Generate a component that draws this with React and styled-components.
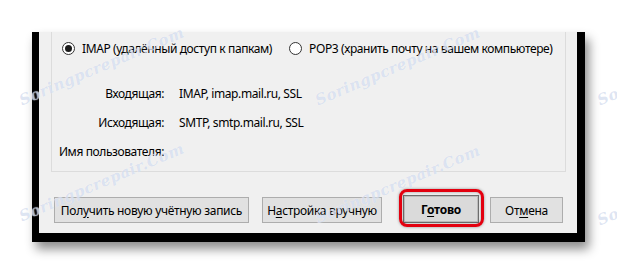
import React from "react";
import styled, { createGlobalStyle } from "styled-components";

const GlobalStyle = createGlobalStyle`
  html, body {
    margin: 0;
    padding: 0;
    background: #ffffff;
  }
  body {
    font-family: "Noto Sans", "Open Sans", sans-serif;
    font-size: 12px;
    color: #000;
  }
`;

const Page = styled.div`
  position: relative;
  width: 617px;
  height: 272px;
  overflow: hidden;
  padding: 32px 0 0 32px;
  box-sizing: border-box;
`;

const Window = styled.div`
  width: 553px;
  box-sizing: border-box;
  background: #f0f0f0;
  border-left: 7px solid #000;
  border-right: 8px solid #000;
  border-bottom: 9px solid #000;
  padding: 0 11px 10px 12px;
  box-shadow: 4px 7px 10px rgba(0, 0, 0, 0.45);
`;

const GroupBox = styled.div`
  height: 140px;
  box-sizing: border-box;
  border: 1px solid #dcdcdc;
  border-top: none;
  padding-top: 8px;
`;

const RadioRow = styled.div`
  display: flex;
  align-items: center;
  height: 16px;
  padding-left: 10px;
`;

const RadioOption = styled.label`
  display: flex;
  align-items: center;
  gap: 7px;
  margin-right: 17px;
  letter-spacing: -0.4px;
  white-space: nowrap;
`;

const RadioCircle = styled.span`
  width: 11px;
  height: 11px;
  border: 1px solid #333;
  border-radius: 50%;
  background: #fff;
  display: flex;
  align-items: center;
  justify-content: center;

  &::after {
    content: "";
    width: 7px;
    height: 7px;
    border-radius: 50%;
    background: ${({ $checked }) => ($checked ? "#1a1a1a" : "transparent")};
  }
`;

const Details = styled.div`
  display: grid;
  grid-template-columns: 112px auto;
  column-gap: 15px;
  row-gap: 13px;
  margin-top: 30px;
  letter-spacing: -0.4px;
`;

const Label = styled.span`
  text-align: right;
  line-height: 16px;
  white-space: nowrap;
`;

const Value = styled.span`
  line-height: 16px;
  white-space: nowrap;
`;

const ButtonRow = styled.div`
  display: flex;
  align-items: flex-end;
  margin-top: 23px;
  padding-left: 3px;
`;

const Button = styled.button`
  position: relative;
  width: ${({ $w }) => $w}px;
  height: ${({ $primary }) => ($primary ? 28 : 26)}px;
  margin-left: ${({ $gap }) => $gap || 0}px;
  box-sizing: border-box;
  background: ${({ $primary }) => ($primary ? "#dadada" : "#e1e1e1")};
  border: 1px solid ${({ $primary }) => ($primary ? "#6f6f6f" : "#adadad")};
  box-shadow: ${({ $primary }) => ($primary ? "inset 0 0 0 1px #bcbcbc" : "none")};
  font-family: "Noto Sans", "Open Sans", sans-serif;
  font-size: 12px;
  font-weight: ${({ $primary }) => ($primary ? 700 : 400)};
  letter-spacing: -0.3px;
  color: #000;
  padding: 0;
  white-space: nowrap;

  u {
    text-decoration-thickness: 1px;
    text-underline-offset: 2px;
  }
`;

const Highlight = styled.span`
  position: absolute;
  top: -7px;
  bottom: -5px;
  left: -5px;
  right: -6px;
  border: 3px solid #e3000f;
  border-radius: 8px;
  box-shadow: 0 0 3px rgba(0, 0, 0, 0.4), inset 0 0 3px rgba(0, 0, 0, 0.35);
  pointer-events: none;
`;

const Watermark = styled.span`
  position: absolute;
  display: inline-block;
  left: ${({ $x }) => $x}px;
  top: ${({ $y }) => $y}px;
  transform: rotate(-23deg);
  transform-origin: left center;
  font-family: "DejaVu Serif", serif;
  font-style: italic;
  font-weight: 700;
  font-size: 15px;
  letter-spacing: 0.5px;
  color: rgba(160, 180, 220, 0.36);
  text-shadow: 0 0 1px rgba(255, 255, 255, 0.8);
  white-space: nowrap;
  pointer-events: none;
`;

const marks = [
  { x: 20, y: 92 },
  { x: 316, y: 92 },
  { x: 598, y: 92 },
  { x: 20, y: 208 },
  { x: 316, y: 210 },
  { x: 598, y: 212 },
];

export default function App() {
  return (
    <>
      <GlobalStyle />
      <Page>
        <Window>
          <GroupBox>
            <RadioRow>
              <RadioOption>
                <RadioCircle $checked />
                IMAP (удалённый доступ к папкам)
              </RadioOption>
              <RadioOption>
                <RadioCircle />
                POP3 (хранить почту на вашем компьютере)
              </RadioOption>
            </RadioRow>
            <Details>
              <Label>Входящая:</Label>
              <Value>IMAP, imap.mail.ru, SSL</Value>
              <Label>Исходящая:</Label>
              <Value>SMTP, smtp.mail.ru, SSL</Value>
              <Label>Имя пользователя:</Label>
              <Value />
            </Details>
          </GroupBox>
          <ButtonRow>
            <Button $w={195}>
              Пол<u>у</u>чить новую учётную запись
            </Button>
            <Button $w={120} $gap={13}>
              Н<u>а</u>стройка вручную
            </Button>
            <Button $w={76} $gap={21} $primary>
              Г<u>о</u>тово
              <Highlight />
            </Button>
            <Button $w={73} $gap={11}>
              От<u>м</u>ена
            </Button>
          </ButtonRow>
        </Window>
        {marks.map((m, i) => (
          <Watermark key={i} $x={m.x} $y={m.y}>
            Soringpcrepair.Com
          </Watermark>
        ))}
      </Page>
    </>
  );
}
